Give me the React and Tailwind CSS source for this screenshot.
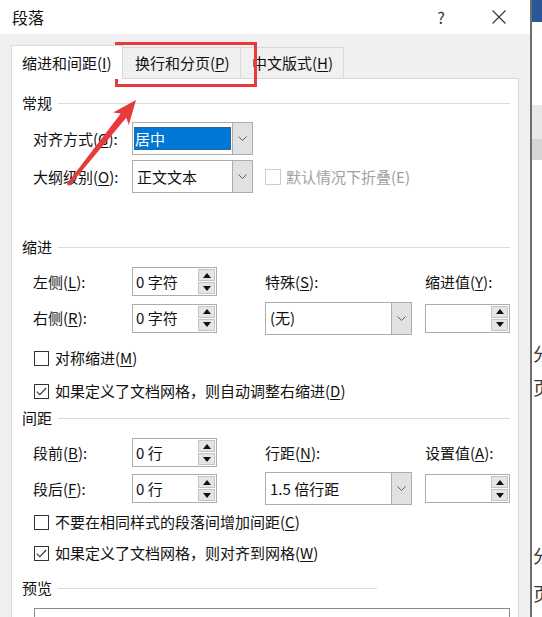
import React from 'react';

const Mn = ({ text, k, colon }) => (
  <span className="whitespace-nowrap">
    {text}(<span className="underline underline-offset-2 decoration-1">{k}</span>){colon ? ':' : ''}
  </span>
);

const Chevron = () => (
  <svg width="9" height="5" viewBox="0 0 9 5">
    <path d="M0.5 0.5 L4.5 4.5 L8.5 0.5" fill="none" stroke="#5f5f5f" strokeWidth="1" />
  </svg>
);

const Combo = ({ w, children }) => (
  <div className={`flex h-[33px] border border-[#adadad] bg-white ${w}`}>
    <div className="flex flex-1 items-center px-px">{children}</div>
    <div className="flex w-[20px] items-center justify-center border-l border-[#adadad] bg-[#e1e1e1]">
      <Chevron />
    </div>
  </div>
);

const Spin = ({ value }) => (
  <div className="flex h-[29px] w-[85px] border border-[#adadad] bg-white">
    <div className="flex flex-1 items-center pl-[3px] leading-[20px]">{value}</div>
    <div className="flex w-[19px] flex-col gap-px p-px">
      <div className="flex flex-1 items-center justify-center border border-[#c4c4c4] bg-[#e5e5e5]">
        <svg width="8" height="5" viewBox="0 0 8 5"><polygon points="4,0 8,5 0,5" fill="#111" /></svg>
      </div>
      <div className="flex flex-1 items-center justify-center border border-[#c4c4c4] bg-[#e5e5e5]">
        <svg width="8" height="5" viewBox="0 0 8 5"><polygon points="0,0 8,0 4,5" fill="#111" /></svg>
      </div>
    </div>
  </div>
);

const Check = ({ checked }) => (
  <div className="flex h-[15px] w-[15px] items-center justify-center border border-[#333] bg-white">
    {checked && (
      <svg width="11" height="9" viewBox="0 0 11 9">
        <path d="M0.8 4.6 L3.8 7.6 L10.2 1" fill="none" stroke="#333" strokeWidth="1.1" />
      </svg>
    )}
  </div>
);

const Section = ({ title, mt, short }) => (
  <div className={`flex h-[20px] items-center pl-[10px] pr-[8px] leading-[20px] ${mt}`}>
    <span>{title}</span>
    <div className={`ml-[6px] h-px bg-[#dadada] ${short ? 'w-[319px]' : 'flex-1'}`} />
  </div>
);

const CheckRow = ({ checked, mt, children }) => (
  <div className={`flex h-[20px] items-center gap-[6px] pl-[22px] leading-[20px] ${mt}`}>
    <Check checked={checked} />
    {children}
  </div>
);

export default function App() {
  return (
    <div className="relative flex h-[617px] w-[542px] overflow-hidden bg-white font-['Noto_Sans_CJK_SC','Microsoft_YaHei',sans-serif] text-[15px] text-[#111]">
      <div className="flex w-[530px] flex-col bg-[#f0f0f0]">
        <div className="flex h-[34px] items-center bg-white pl-[12px] pr-[8px]">
          <span className="text-[16px] leading-[20px]">段落</span>
          <div className="ml-auto flex w-[46px] justify-center text-[16px] text-[#333]">?</div>
          <div className="ml-[12px] flex w-[46px] justify-center">
            <svg width="14" height="14" viewBox="0 0 14 14">
              <path d="M0.5 0.5 L13.5 13.5 M13.5 0.5 L0.5 13.5" stroke="#333" strokeWidth="1.1" />
            </svg>
          </div>
        </div>

        <div className="flex min-h-0 flex-1 flex-col px-[11px] pt-[11px]">
          <div className="flex h-[33px] items-end">
            <div className="relative z-10 -mb-px flex h-[34px] w-[112px] items-center border-x border-t border-[#d9d9d9] bg-white pl-[10px] leading-[20px]">
              <Mn text="缩进和间距" k="I" />
            </div>
            <div className="flex h-[31px] w-[118px] items-center border-r border-t border-[#d9d9d9] bg-[#f0f0f0] pl-[12px] leading-[20px]">
              <Mn text="换行和分页" k="P" />
            </div>
            <div className="flex h-[31px] w-[103px] items-center border-r border-t border-[#d9d9d9] bg-[#f0f0f0] pl-[11px] leading-[20px]">
              <Mn text="中文版式" k="H" />
            </div>
          </div>

          <div className="min-h-0 flex-1 overflow-hidden border border-b-0 border-[#d9d9d9] bg-white">
            <Section title="常规" mt="mt-[14px]" />

            <div className="mt-[9px] flex h-[33px] items-center pl-[21px] leading-[20px]">
              <div className="w-[99px]"><Mn text="对齐方式" k="G" colon /></div>
              <Combo w="w-[121px]">
                <div className="flex h-[23px] flex-1 items-center bg-[#0078d7] pl-[1px] text-white outline-1 outline-dotted outline-[#555] -outline-offset-1">
                  居中
                </div>
              </Combo>
            </div>

            <div className="mt-[5px] flex h-[33px] items-center pl-[21px] leading-[20px]">
              <div className="w-[99px]"><Mn text="大纲级别" k="O" colon /></div>
              <Combo w="w-[121px]">
                <span className="pl-[3px]">正文文本</span>
              </Combo>
              <div className="ml-[12px] flex items-center gap-[5px] text-[#a0a0a0]">
                <div className="h-[16px] w-[16px] border border-[#cccccc] bg-white" />
                <span>默认情况下折叠(E)</span>
              </div>
            </div>

            <Section title="缩进" mt="mt-[44px]" />

            <div className="mt-[10px] flex h-[29px] items-center pl-[21px] leading-[20px]">
              <div className="w-[99px]"><Mn text="左侧" k="L" colon /></div>
              <Spin value="0 字符" />
              <div className="ml-[48px] w-[147px]"><Mn text="特殊" k="S" colon /></div>
              <div className="ml-[13px] w-[85px]"><Mn text="缩进值" k="Y" colon /></div>
            </div>

            <div className="mt-[6px] flex h-[32px] items-center pl-[21px] leading-[20px]">
              <div className="w-[99px]"><Mn text="右侧" k="R" colon /></div>
              <Spin value="0 字符" />
              <div className="ml-[48px]">
                <Combo w="w-[147px]">
                  <span className="pl-[3px]">(无)</span>
                </Combo>
              </div>
              <div className="ml-[13px]"><Spin value="" /></div>
            </div>

            <CheckRow mt="mt-[14px]">
              <Mn text="对称缩进" k="M" />
            </CheckRow>
            <CheckRow checked mt="mt-[13px]">
              <Mn text="如果定义了文档网格，则自动调整右缩进" k="D" />
            </CheckRow>

            <Section title="间距" mt="mt-[7px]" />

            <div className="mt-[10px] flex h-[29px] items-center pl-[21px] leading-[20px]">
              <div className="w-[99px]"><Mn text="段前" k="B" colon /></div>
              <Spin value="0 行" />
              <div className="ml-[48px] w-[147px]"><Mn text="行距" k="N" colon /></div>
              <div className="ml-[13px] w-[85px]"><Mn text="设置值" k="A" colon /></div>
            </div>

            <div className="mt-[5px] flex h-[33px] items-center pl-[21px] leading-[20px]">
              <div className="w-[99px]"><Mn text="段后" k="F" colon /></div>
              <Spin value="0 行" />
              <div className="ml-[48px]">
                <Combo w="w-[147px]">
                  <span className="pl-[3px]">1.5 倍行距</span>
                </Combo>
              </div>
              <div className="ml-[13px]"><Spin value="" /></div>
            </div>

            <CheckRow mt="mt-[7px]">
              <Mn text="不要在相同样式的段落间增加间距" k="C" />
            </CheckRow>
            <CheckRow checked mt="mt-[11px]">
              <Mn text="如果定义了文档网格，则对齐到网格" k="W" />
            </CheckRow>

            <Section title="预览" mt="mt-[15px]" short />

            <div className="ml-[22px] mr-[8px] mt-[10px] h-[40px] border border-[#8a8a8a] bg-white" />
          </div>
        </div>
      </div>

      <div className="flex w-[12px] flex-col overflow-hidden border-l-2 border-[#6e6e6e] bg-white">
        <div className="h-[22px] shrink-0 bg-[#2b579a]" />
        <div className="h-[83px] shrink-0" />
        <div className="h-[34px] shrink-0 bg-[#e8e8e8]" />
        <div className="h-[21px] shrink-0 bg-[#d6d6d6]" />
        <div className="h-[183px] shrink-0" />
        <div className="h-[20px] shrink-0 whitespace-nowrap pl-px text-[18px] leading-[20px] text-[#333]">分</div>
        <div className="h-[14px] shrink-0" />
        <div className="h-[20px] shrink-0 whitespace-nowrap pl-px text-[18px] leading-[20px] text-[#333]">页</div>
        <div className="h-[148px] shrink-0" />
        <div className="h-[20px] shrink-0 whitespace-nowrap pl-px text-[18px] leading-[20px] text-[#333]">分</div>
        <div className="h-[18px] shrink-0" />
        <div className="h-[20px] shrink-0 whitespace-nowrap pl-px text-[18px] leading-[20px] text-[#333]">页</div>
      </div>

      <div className="pointer-events-none absolute left-[115px] top-[42px] h-[45px] w-[142px] border-[3px] border-[#e8393d]" />
      <svg className="pointer-events-none absolute left-0 top-0" width="542" height="617" viewBox="0 0 542 617">
        <polygon
          points="136,100 128.8,124.9 126.2,117.8 69.2,185.9 66.8,184.1 120.8,113.4 113.2,112.5"
          fill="#e8393d"
        />
      </svg>
    </div>
  );
}
